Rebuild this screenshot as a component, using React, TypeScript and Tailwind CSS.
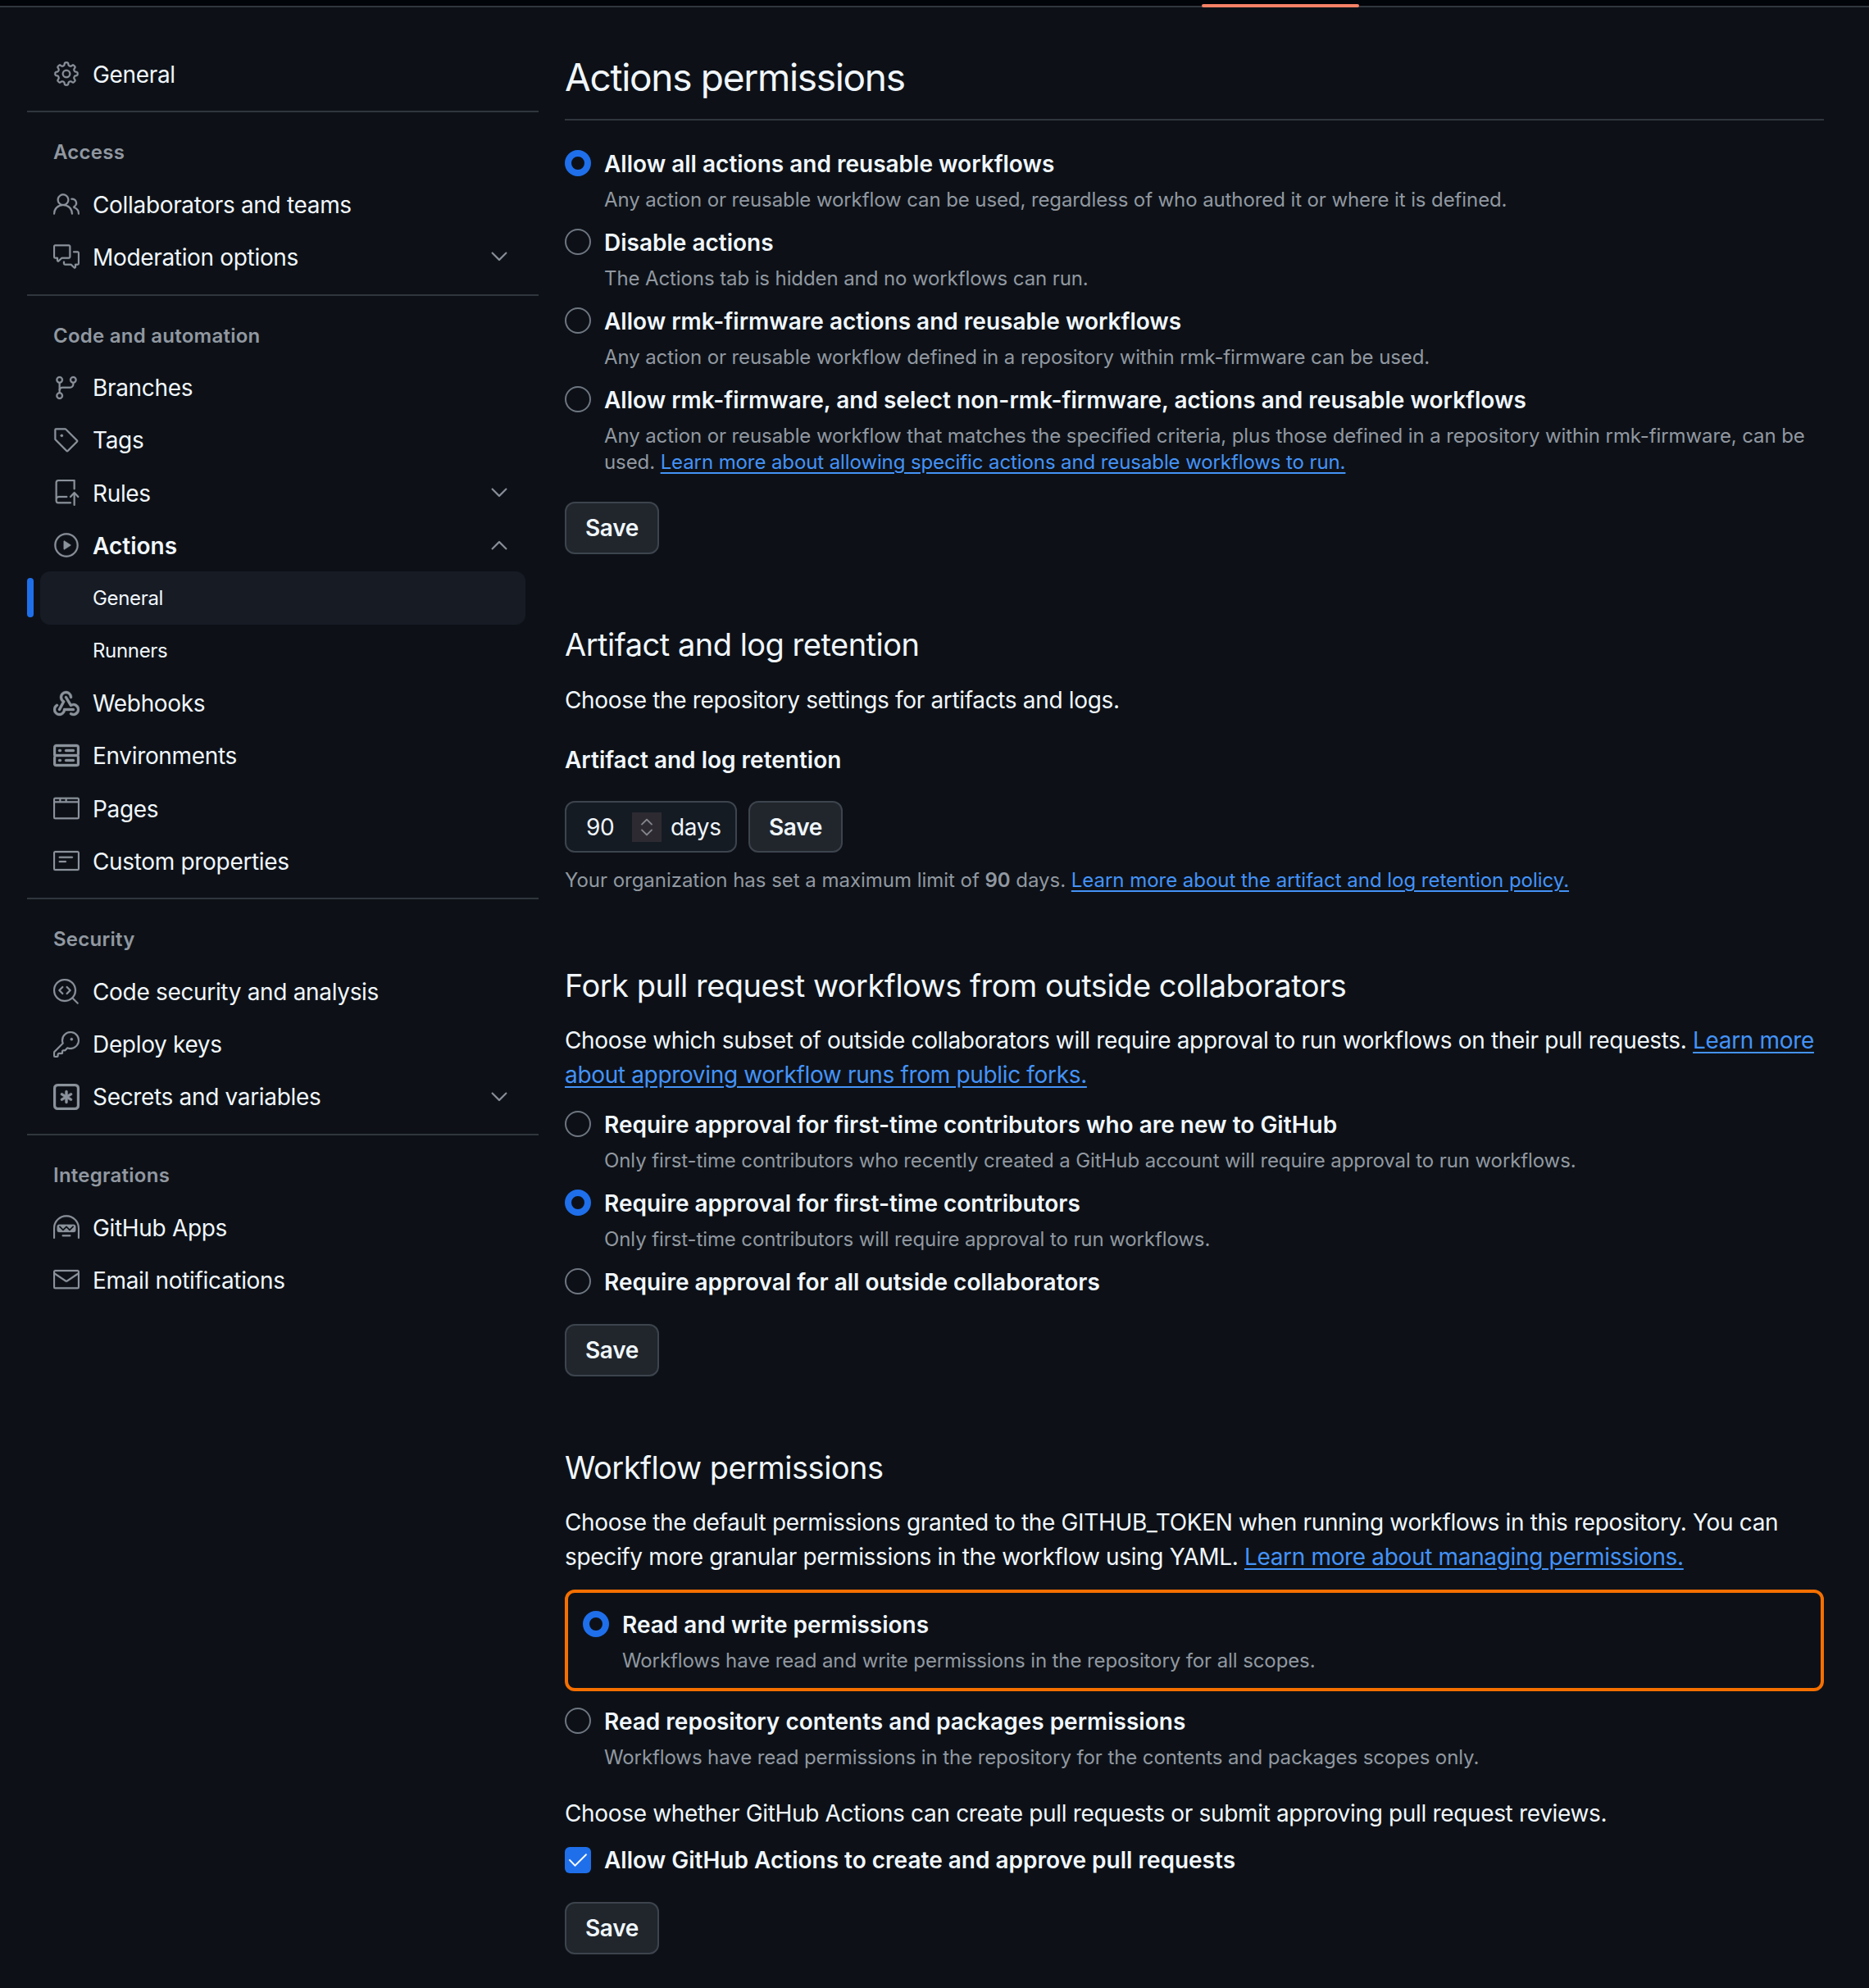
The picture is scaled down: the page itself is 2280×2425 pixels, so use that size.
import type { ComponentType, ReactNode } from "react";
import {
  GoBrowser,
  GoCheck,
  GoChevronDown,
  GoChevronUp,
  GoCodescan,
  GoCommentDiscussion,
  GoGear,
  GoGitBranch,
  GoHubot,
  GoKey,
  GoMail,
  GoNote,
  GoPeople,
  GoPlay,
  GoRepoPush,
  GoTag,
} from "react-icons/go";

type Icon = ComponentType<{ size?: number; className?: string }>;

interface NavRow {
  label: string;
  icon?: Icon;
  chevron?: "up" | "down";
  bold?: boolean;
  sub?: boolean;
  active?: boolean;
}

interface NavGroup {
  title?: string;
  rows: NavRow[];
}

// not available (or too old) in react-icons/go
function GoWebhook({ size, className }: { size?: number; className?: string }) {
  return (
    <svg width={size} height={size} viewBox="0 0 16 16" fill="currentColor" className={className}>
      <path d="M5.5 4.25a2.25 2.25 0 0 1 4.5 0 .75.75 0 0 0 1.5 0 3.75 3.75 0 1 0-6.14 2.889l-2.272 4.258a.75.75 0 0 0 1.324.706L7 7.25a.75.75 0 0 0-.309-1.015A2.25 2.25 0 0 1 5.5 4.25Z" />
      <path d="M7.364 3.607a.75.75 0 0 1 1.03.257l2.608 4.349a3.75 3.75 0 1 1-.628 6.785.75.75 0 0 1 .752-1.299 2.25 2.25 0 1 0-.033-3.88.75.75 0 0 1-1.03-.256L7.107 4.636a.75.75 0 0 1 .257-1.03Z" />
      <path d="M2.9 8.776A.75.75 0 0 1 2.625 9.8 2.25 2.25 0 1 0 6 11.75a.75.75 0 0 1 .75-.751h5.5a.75.75 0 0 1 0 1.5H7.425a3.751 3.751 0 1 1-5.55-3.998.75.75 0 0 1 1.024.274Z" />
    </svg>
  );
}

function GoKeyAsterisk({ size, className }: { size?: number; className?: string }) {
  return (
    <svg width={size} height={size} viewBox="0 0 16 16" fill="currentColor" className={className}>
      <path d="M0 2.75A2.75 2.75 0 0 1 2.75 0h10.5A2.75 2.75 0 0 1 16 2.75v10.5A2.75 2.75 0 0 1 13.25 16H2.75A2.75 2.75 0 0 1 0 13.25ZM2.75 1.5c-.69 0-1.25.56-1.25 1.25v10.5c0 .69.56 1.25 1.25 1.25h10.5c.69 0 1.25-.56 1.25-1.25V2.75c0-.69-.56-1.25-1.25-1.25Z" />
      <path d="M8 4a.75.75 0 0 1 .75.75V6.7l1.69-.975a.75.75 0 0 1 .75 1.3L9.5 8l1.69.976a.75.75 0 0 1-.75 1.298L8.75 9.3v1.951a.75.75 0 0 1-1.5 0V9.299l-1.69.976a.75.75 0 0 1-.75-1.3L6.5 8l-1.69-.975a.75.75 0 0 1 .75-1.3l1.69.976V4.75A.75.75 0 0 1 8 4Z" />
    </svg>
  );
}

function GoServer({ size, className }: { size?: number; className?: string }) {
  return (
    <svg width={size} height={size} viewBox="0 0 16 16" fill="currentColor" className={className}>
      <path d="M1.75 1h12.5c.966 0 1.75.784 1.75 1.75v4c0 .372-.116.717-.314 1 .198.283.314.628.314 1v4a1.75 1.75 0 0 1-1.75 1.75H1.75A1.75 1.75 0 0 1 0 13.25v-4c0-.372.116-.717.314-1a1.739 1.739 0 0 1-.314-1v-4C0 1.784.784 1 1.75 1ZM1.5 2.75v4c0 .138.112.25.25.25h12.5a.25.25 0 0 0 .25-.25v-4a.25.25 0 0 0-.25-.25H1.75a.25.25 0 0 0-.25.25Zm.25 5.75a.25.25 0 0 0-.25.25v4c0 .138.112.25.25.25h12.5a.25.25 0 0 0 .25-.25v-4a.25.25 0 0 0-.25-.25ZM7 4.75A.75.75 0 0 1 7.75 4h4.5a.75.75 0 0 1 0 1.5h-4.5A.75.75 0 0 1 7 4.75ZM7.75 10h4.5a.75.75 0 0 1 0 1.5h-4.5a.75.75 0 0 1 0-1.5ZM3 4.75A.75.75 0 0 1 3.75 4h.5a.75.75 0 0 1 0 1.5h-.5A.75.75 0 0 1 3 4.75ZM3.75 10h.5a.75.75 0 0 1 0 1.5h-.5a.75.75 0 0 1 0-1.5Z" />
    </svg>
  );
}

const groups: NavGroup[] = [
  { rows: [{ label: "General", icon: GoGear }] },
  {
    title: "Access",
    rows: [
      { label: "Collaborators and teams", icon: GoPeople },
      { label: "Moderation options", icon: GoCommentDiscussion, chevron: "down" },
    ],
  },
  {
    title: "Code and automation",
    rows: [
      { label: "Branches", icon: GoGitBranch },
      { label: "Tags", icon: GoTag },
      { label: "Rules", icon: GoRepoPush, chevron: "down" },
      { label: "Actions", icon: GoPlay, chevron: "up", bold: true },
      { label: "General", sub: true, active: true },
      { label: "Runners", sub: true },
      { label: "Webhooks", icon: GoWebhook },
      { label: "Environments", icon: GoServer },
      { label: "Pages", icon: GoBrowser },
      { label: "Custom properties", icon: GoNote },
    ],
  },
  {
    title: "Security",
    rows: [
      { label: "Code security and analysis", icon: GoCodescan },
      { label: "Deploy keys", icon: GoKey },
      { label: "Secrets and variables", icon: GoKeyAsterisk, chevron: "down" },
    ],
  },
  {
    title: "Integrations",
    rows: [
      { label: "GitHub Apps", icon: GoHubot },
      { label: "Email notifications", icon: GoMail },
    ],
  },
];

function SideRow({ row }: { row: NavRow }) {
  const Ico = row.icon;
  return (
    <div className="relative">
      {row.active && <div className="absolute left-0 top-2 h-12 w-2 rounded-full bg-[#1f6feb]" />}
      <div className={`ml-4 mr-4 flex h-[64.2px] items-center rounded-xl pl-4 pr-4 ${row.active ? "bg-[#171b24]" : ""}`}>
        {Ico ? (
          <Ico size={32} className="mr-4 shrink-0 stroke-current stroke-[0.2] text-[#8b929b]" />
        ) : (
          <span className="w-12 shrink-0" />
        )}
        <span
          className={`flex-1 pt-px text-[#f0f6fc] ${row.sub ? "text-[24px]" : "text-[28px]"} ${row.bold ? "font-semibold" : "tracking-[-0.33px]"}`}
        >
          {row.label}
        </span>
        {row.chevron === "down" && <GoChevronDown size={32} className="stroke-current stroke-[0.2] text-[#8b929b]" />}
        {row.chevron === "up" && <GoChevronUp size={32} className="stroke-current stroke-[0.2] text-[#8b929b]" />}
      </div>
    </div>
  );
}

function Sidebar() {
  return (
    <aside className="ml-[33px] w-[624px] shrink-0 pt-[49px]">
      {groups.map((g, i) => (
        <div key={i} className={i > 0 ? "mt-[13px] border-t-2 border-[#30363d] pt-[33px]" : ""}>
          {g.title && (
            <div className="mb-[15px] h-8 pl-8 text-[24px] font-semibold leading-8 tracking-[0.25px] text-[#9198a1]">
              {g.title}
            </div>
          )}
          {g.rows.map((r) => (
            <SideRow key={r.label + (r.sub ? "-sub" : "")} row={r} />
          ))}
        </div>
      ))}
    </aside>
  );
}

function Radio({ checked }: { checked?: boolean }) {
  return (
    <span
      className={`mt-[3px] h-8 w-8 shrink-0 rounded-full ${
        checked ? "border-[8px] border-[#1f6feb]" : "border-2 border-[#6e7681]"
      }`}
    />
  );
}

function Option({ label, desc, checked }: { label: string; desc?: ReactNode; checked?: boolean }) {
  return (
    <div className="flex gap-4">
      <Radio checked={checked} />
      <div>
        <div className="h-10 text-[28px] font-semibold leading-10 text-[#f0f6fc]">{label}</div>
        {desc && <div className="mt-2 text-[24px] leading-8 tracking-[-0.1px] text-[#9198a1]">{desc}</div>}
      </div>
    </div>
  );
}

function SaveBtn({ className = "" }: { className?: string }) {
  return (
    <div
      className={`flex h-16 w-[115px] items-center justify-center rounded-xl border-2 border-[#3d444d] bg-[#21262d] text-[28px] font-semibold tracking-[-0.3px] text-[#f0f6fc] ${className}`}
    >
      Save
    </div>
  );
}

function A({ children }: { children: ReactNode }) {
  return <span className="text-[#4493f8] underline underline-offset-4">{children}</span>;
}

function Heading({ children, className = "" }: { children: ReactNode; className?: string }) {
  return (
    <h2 className={`h-[60px] text-[38px] font-normal leading-[60px] tracking-[-0.5px] text-[#f0f6fc] ${className}`}>
      {children}
    </h2>
  );
}

function Para({ children, className = "" }: { children: ReactNode; className?: string }) {
  return <p className={`text-[28px] leading-[42px] tracking-[-0.34px] text-[#f0f6fc] ${className}`}>{children}</p>;
}

function Main() {
  return (
    <main className="ml-8 w-[1536px] shrink-0 pt-[55px]">
      <h1 className="h-[60px] text-[46px] font-normal leading-[60px] tracking-[-1.3px] text-[#f0f6fc]">Actions permissions</h1>
      <div className="mt-[21px] h-0.5 bg-[#30363d]" />

      <div className="mt-[33px] flex flex-col gap-4">
        <Option
          checked
          label="Allow all actions and reusable workflows"
          desc="Any action or reusable workflow can be used, regardless of who authored it or where it is defined."
        />
        <Option label="Disable actions" desc="The Actions tab is hidden and no workflows can run." />
        <Option
          label="Allow rmk-firmware actions and reusable workflows"
          desc="Any action or reusable workflow defined in a repository within rmk-firmware can be used."
        />
        <Option
          label="Allow rmk-firmware, and select non-rmk-firmware, actions and reusable workflows"
          desc={
            <>
              Any action or reusable workflow that matches the specified criteria, plus those defined in a repository
              within rmk-firmware, can be used.{" "}
              <A>Learn more about allowing specific actions and reusable workflows to run.</A>
            </>
          }
        />
      </div>
      <SaveBtn className="mt-8" />

      <Heading className="mt-20">Artifact and log retention</Heading>
      <Para className="mt-[17px]">Choose the repository settings for artifacts and logs.</Para>
      <div className="mt-8 h-10 text-[28px] font-semibold leading-10 text-[#f0f6fc]">Artifact and log retention</div>
      <div className="mt-[30px] flex gap-[14px]">
        <div className="flex h-[63px] w-[210px] items-center rounded-xl border-2 border-[#3d444d] bg-[#151b23] pl-6 pt-px text-[28px] tracking-[-0.3px] text-[#f0f6fc]">
          <span className="w-[56px]">90</span>
          <span className="-mt-px flex h-9 w-9 flex-col items-center justify-center bg-[#2d2a32] text-[#8b8b93]">
            <GoChevronUp size={24} className="-mb-[5px] stroke-current stroke-[0.4]" />
            <GoChevronDown size={24} className="-mt-[5px] stroke-current stroke-[0.4]" />
          </span>
          <span className="ml-[11px]">days</span>
        </div>
        <SaveBtn className="h-[63px]" />
      </div>
      <div className="mt-[18px] text-[24px] leading-8 tracking-[-0.03px] text-[#9198a1]">
        Your organization has set a maximum limit of <b className="font-semibold">90</b> days.{" "}
        <A>Learn more about the artifact and log retention policy.</A>
      </div>

      <Heading className="mt-[82px]">Fork pull request workflows from outside collaborators</Heading>
      <Para className="mt-4">
        Choose which subset of outside collaborators will require approval to run workflows on their pull requests.{" "}
        <A>Learn more about approving workflow runs from public forks.</A>
      </Para>
      <div className="mt-5 flex flex-col gap-4">
        <Option
          label="Require approval for first-time contributors who are new to GitHub"
          desc="Only first-time contributors who recently created a GitHub account will require approval to run workflows."
        />
        <Option
          checked
          label="Require approval for first-time contributors"
          desc="Only first-time contributors will require approval to run workflows."
        />
        <Option label="Require approval for all outside collaborators" />
      </div>
      <SaveBtn className="mt-[31px]" />

      <Heading className="mt-[81px]">Workflow permissions</Heading>
      <Para className="mt-4">
        Choose the default permissions granted to the GITHUB_TOKEN when running workflows in this repository. You can
        specify more granular permissions in the workflow using YAML. <A>Learn more about managing permissions.</A>
      </Para>
      <div className="mt-[19px] h-[124px] rounded-xl border-4 border-[#f56f00] pl-[18px] pt-[19px]">
        <Option
          checked
          label="Read and write permissions"
          desc="Workflows have read and write permissions in the repository for all scopes."
        />
      </div>
      <div className="mt-[17px]">
        <Option
          label="Read repository contents and packages permissions"
          desc="Workflows have read permissions in the repository for the contents and packages scopes only."
        />
      </div>
      <Para className="mt-[31px]">Choose whether GitHub Actions can create pull requests or submit approving pull request reviews.</Para>
      <div className="mt-4 flex items-center gap-4">
        <span className="flex h-8 w-8 shrink-0 items-center justify-center rounded-md bg-[#1f6feb] text-white">
          <GoCheck size={28} className="stroke-current stroke-[0.3]" />
        </span>
        <span className="h-10 text-[28px] font-semibold leading-10 text-[#f0f6fc]">
          Allow GitHub Actions to create and approve pull requests
        </span>
      </div>
      <SaveBtn className="mt-[31px]" />
    </main>
  );
}

export default function App() {
  return (
    <div className="relative h-[2425px] w-[2280px] overflow-hidden bg-[#0d1117] font-[Inter,sans-serif]">
      <div className="h-[7px] bg-[#010409]" />
      <div className="relative h-0.5 bg-[#30363d]">
        <div className="absolute -top-0.5 left-[1466px] h-1 w-[192px] rounded-full bg-[#f78166]" />
      </div>
      <div className="flex">
        <Sidebar />
        <Main />
      </div>
    </div>
  );
}
